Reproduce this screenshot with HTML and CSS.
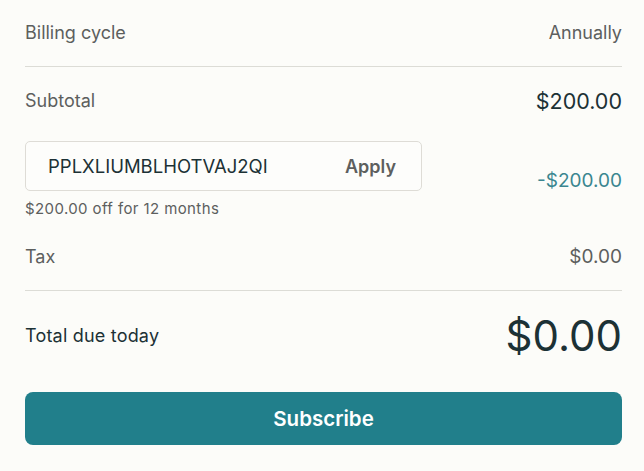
FILE: index.html
```html
<!DOCTYPE html>
<html>
  <head>
    <title>Checkout summary</title>
    <link rel="stylesheet" href="styles.css">
  </head>
  <body>
    <div class="summary">
      <div class="row billing">
        <span class="label">Billing cycle</span>
        <span class="value">Annually</span>
      </div>

      <div class="row subtotal">
        <span class="label">Subtotal</span>
        <span class="amount">$200.00</span>
      </div>

      <div class="discount">
        <div class="promo">
          <div class="promo_box">
            <span class="promo_code">PPLXLIUMBLHOTVAJ2QI</span>
            <span class="promo_apply">Apply</span>
          </div>
          <p class="promo_note">$200.00 off for 12 months</p>
        </div>
        <span class="discount_amount">-$200.00</span>
      </div>

      <div class="row tax">
        <span class="label">Tax</span>
        <span class="value tax_value">$0.00</span>
      </div>

      <div class="row total">
        <span class="total_label">Total due today</span>
        <span class="total_amount">$0.00</span>
      </div>

      <button class="subscribe">Subscribe</button>
    </div>
  </body>
</html>
```

FILE: styles.css
```css
body {
  margin: 0;
  background-color: #fcfcf9;
  font-family: "Inter", "Liberation Sans", sans-serif;
  color: #1c3135;
}

.summary {
  display: flex;
  flex-direction: column;
  padding: 0 22px 0 25px;
}

.row {
  display: flex;
  justify-content: space-between;
  align-items: center;
}

.label,
.value {
  font-size: 18px;
  color: #5d5f5e;
}

.billing {
  height: 64px;
  padding-bottom: 2px;
  border-bottom: 1px solid #dcdcd6;
}

.subtotal {
  height: 67px;
}

.amount {
  font-size: 21.5px;
  color: #1c3135;
}

.discount {
  display: flex;
  justify-content: space-between;
  align-items: flex-start;
  margin-top: 7px;
}

.promo {
  display: flex;
  flex-direction: column;
}

.promo_box {
  display: flex;
  justify-content: space-between;
  align-items: center;
  box-sizing: border-box;
  width: 397px;
  height: 50px;
  padding: 0 25px 0 22px;
  border: 1px solid #dedcd6;
  border-radius: 5px;
  background-color: #fdfdfb;
}

.promo_code {
  font-size: 18.5px;
  color: #1c3135;
}

.promo_apply {
  font-size: 18px;
  font-weight: 600;
  color: #5d5f5e;
}

.promo_note {
  margin: 8px 0 0 0;
  font-size: 15px;
  letter-spacing: 0.4px;
  line-height: 20px;
  color: #5d5f5e;
}

.discount_amount {
  margin-top: 28px;
  font-size: 19px;
  color: #3b8690;
}

.tax {
  height: 22px;
  margin-top: 26px;
  padding-bottom: 23px;
  border-bottom: 1px solid #dcdcd6;
}

.tax_value {
  font-size: 19px;
}

.total {
  height: 88px;
}

.total_label {
  font-size: 18px;
  letter-spacing: 0.2px;
  color: #1c3135;
}

.total_amount {
  font-size: 42px;
  color: #1c3135;
}

.subscribe {
  height: 53px;
  margin-top: 13px;
  border: none;
  border-radius: 8px;
  background-color: #217f8b;
  color: #ffffff;
  font-family: "Inter", "Liberation Sans", sans-serif;
  font-size: 20.5px;
  font-weight: 600;
  cursor: pointer;
}
```
